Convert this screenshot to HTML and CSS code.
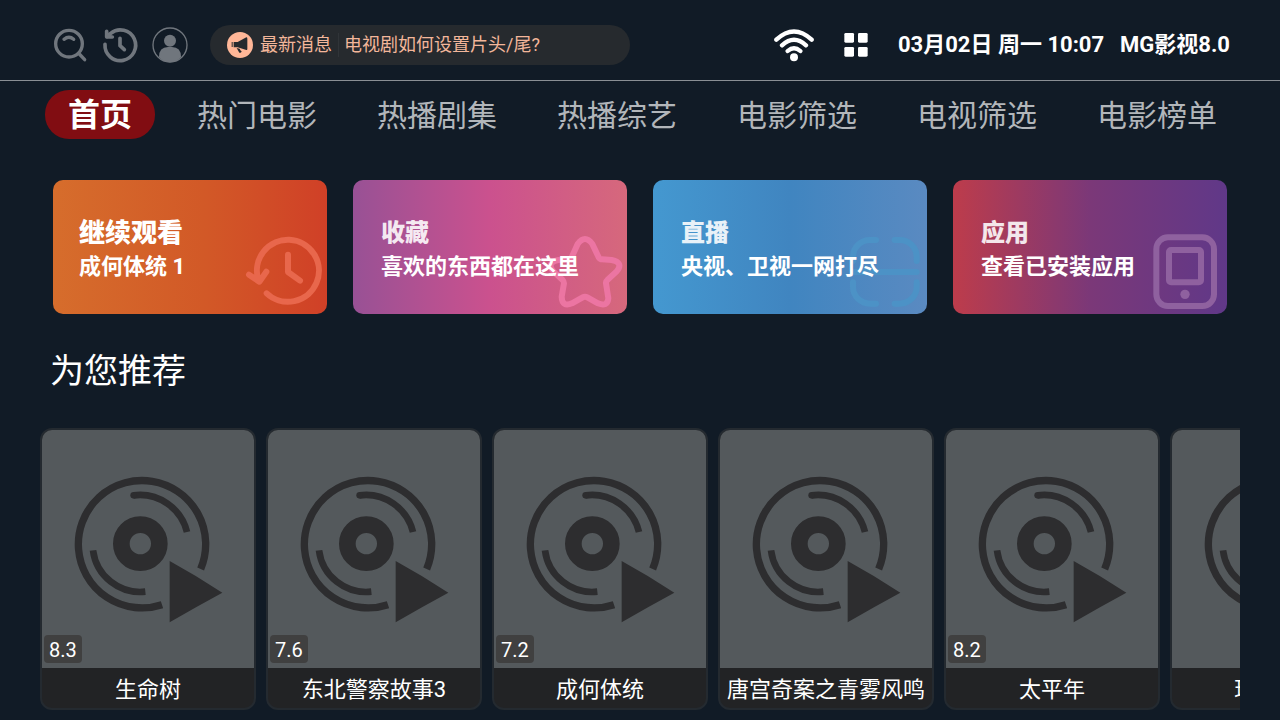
FILE: index.html
```html
<!DOCTYPE html>
<html lang="zh-CN">
<head>
  <meta charset="UTF-8">
  <meta name="viewport" content="width=device-width, initial-scale=1">
  <title>MG影视</title>
  <link rel="stylesheet" href="styles.css">
</head>
<body>
  <svg class="sprite" aria-hidden="true">
    <symbol id="disc" viewBox="130 165 450 450">
      <g fill="none" stroke="currentColor">
        <path stroke-width="22" d="M513 450A191 191 0 1 0 397 557"/>
        <path stroke-width="20" d="M312 229A146 146 0 0 1 472 339M190 394A143 143 0 0 0 347 518"/>
        <circle stroke-width="50" cx="332" cy="374" r="57"/>
      </g>
      <circle cx="312" cy="229" r="10" fill="currentColor"/>
      <path fill="currentColor" d="M420 426Q500 470 578 521Q500 563 420 610Z"/>
    </symbol>
  </svg>

  <header class="topbar">
    <button class="icon-btn" aria-label="搜索">
      <svg viewBox="30 45 120 120" fill="none" stroke="currentColor" stroke-width="10" stroke-linecap="round">
        <circle cx="87" cy="101" r="40"/>
        <path d="M118 132L134 149M72 88Q87 76 101 88"/>
      </svg>
    </button>
    <button class="icon-btn" aria-label="历史">
      <svg viewBox="180 45 120 120" fill="none" stroke="currentColor" stroke-width="11" stroke-linecap="round" stroke-linejoin="round">
        <path d="M195 103A46 46 0 1 0 212 70L201 81M200 64V81H217M240 85V107L253 119"/>
      </svg>
    </button>
    <button class="icon-btn" aria-label="用户">
      <svg viewBox="330 45 120 120" fill="currentColor">
        <circle cx="390" cy="105" r="51" fill="none" stroke="currentColor" stroke-width="4"/>
        <circle cx="390" cy="92" r="18"/>
        <path d="M357 141Q357 111 384 111H396Q423 111 423 141Q410 157 390 157Q370 157 357 141Z"/>
      </svg>
    </button>

    <a class="notice" href="#">
      <svg class="notice-icon" viewBox="561 66 78 78">
        <circle cx="600" cy="105" r="39" fill="#ffb798"/>
        <path fill="#262a2e" d="M575 96H578V111H575ZM581 96H593L619 82Q622 82 622 86V117Q622 121 619 120L593 112H581ZM590 114L599 116Q600 121 605 124Q603 130 598 128Z"/>
      </svg>
      <span class="notice-label">最新消息</span>
      <span class="notice-text">电视剧如何设置片头/尾?</span>
    </a>

    <div class="status">
      <svg class="wifi" viewBox="64 55 120 99" fill="none" stroke="#fff" stroke-width="13" stroke-linecap="round">
        <path d="M71 87Q124 38 177 87M88 104Q124 71 160 104M105 121Q124 104 143 121"/>
        <circle cx="124" cy="140" r="12" fill="#fff" stroke="none"/>
      </svg>
      <button class="grid-btn" aria-label="全部应用">
        <svg viewBox="275 69 72 72" fill="#fff">
          <rect x="276" y="69" width="29" height="29" rx="4"/>
          <rect x="317" y="69" width="29" height="29" rx="4"/>
          <rect x="276" y="111" width="29" height="29" rx="4"/>
          <rect x="317" y="111" width="29" height="29" rx="4"/>
        </svg>
      </button>
      <div class="status-text">
        <span>03月02日 周一 10:07</span>
        <span>MG影视8.0</span>
      </div>
    </div>
  </header>

  <nav class="tabs">
    <a class="tab active" href="#">首页</a>
    <a class="tab" href="#">热门电影</a>
    <a class="tab" href="#">热播剧集</a>
    <a class="tab" href="#">热播综艺</a>
    <a class="tab" href="#">电影筛选</a>
    <a class="tab" href="#">电视筛选</a>
    <a class="tab" href="#">电影榜单</a>
  </nav>

  <main>
    <section class="shortcuts">
      <a class="shortcut continue" href="#">
        <svg class="shortcut-icon" viewBox="615 192 246 240">
          <path d="M680 370A93 93 0 1 0 655 330M627 314L658 335L679 305M744 254V306L780 332"/>
        </svg>
        <strong>继续观看</strong>
        <span>成何体统 1</span>
      </a>
      <a class="shortcut favorite" href="#">
        <svg class="shortcut-icon" viewBox="615 192 246 240">
          <path d="M713 222Q735 192 757 222L776 262Q780 268 786 268L815 270Q852 278 830 304L802 330Q797 334 798 340L805 385Q802 412 774 400L742 382Q735 378 728 382L696 400Q666 412 665 380L672 340Q672 334 668 330L640 304Q618 278 655 270L685 268Q692 267 695 262Z"/>
        </svg>
        <strong>收藏</strong>
        <span>喜欢的东西都在这里</span>
      </a>
      <a class="shortcut live" href="#">
        <svg class="shortcut-icon" viewBox="615 192 246 240">
          <path d="M708 210H690A51 51 0 0 0 639 261V273M764 210H779A51 51 0 0 1 830 261V273M639 337V350A51 51 0 0 0 690 401H708M830 337V350A51 51 0 0 1 779 401H764M639 306H830"/>
        </svg>
        <strong>直播</strong>
        <span>央视、卫视一网打尽</span>
      </a>
      <a class="shortcut apps" href="#">
        <svg class="shortcut-icon" viewBox="615 192 246 240">
          <rect x="649" y="202" width="173" height="206" rx="35"/>
          <rect x="687" y="240" width="96" height="97" rx="6"/>
          <circle class="dot" cx="735" cy="373" r="14"/>
        </svg>
        <strong>应用</strong>
        <span>查看已安装应用</span>
      </a>
    </section>

    <h2 class="section-title">为您推荐</h2>

    <section class="posters">
      <a class="poster" href="#">
        <div class="cover"><svg><use href="#disc"/></svg><span class="score">8.3</span></div>
        <div class="name">生命树</div>
      </a>
      <a class="poster" href="#">
        <div class="cover"><svg><use href="#disc"/></svg><span class="score">7.6</span></div>
        <div class="name">东北警察故事3</div>
      </a>
      <a class="poster" href="#">
        <div class="cover"><svg><use href="#disc"/></svg><span class="score">7.2</span></div>
        <div class="name">成何体统</div>
      </a>
      <a class="poster" href="#">
        <div class="cover"><svg><use href="#disc"/></svg></div>
        <div class="name">唐宫奇案之青雾风鸣</div>
      </a>
      <a class="poster" href="#">
        <div class="cover"><svg><use href="#disc"/></svg><span class="score">8.2</span></div>
        <div class="name">太平年</div>
      </a>
      <a class="poster" href="#">
        <div class="cover"><svg><use href="#disc"/></svg></div>
        <div class="name">现在出发</div>
      </a>
    </section>
  </main>
</body>
</html>
```

FILE: styles.css
```css
* {
  box-sizing: border-box;
}
body {
  margin: 0;
  background: #111b26;
  color: #fff;
  font-family: Roboto, "Noto Sans CJK SC", sans-serif;
  overflow: hidden;
}
a {
  color: inherit;
  text-decoration: none;
}
button {
  padding: 0;
  border: none;
  background: none;
  color: inherit;
  cursor: pointer;
}
svg {
  display: block;
}
.sprite {
  display: none;
}

/* top bar */
.topbar {
  display: flex;
  align-items: center;
  gap: 10px;
  padding: 25px 50px 15px;
  border-bottom: 1px solid #8a8f94;
}
.icon-btn {
  width: 40px;
  height: 40px;
  color: #70767d;
}
.notice {
  display: flex;
  align-items: center;
  width: 420px;
  height: 40px;
  margin-left: 10px;
  padding: 0 17px;
  border-radius: 20px;
  background: #262a2e;
  color: #f3b69a;
  font-size: 18px;
  line-height: 24px;
}
.notice-icon {
  width: 26px;
  height: 26px;
  margin-right: 7px;
}
.notice-text {
  margin-left: 6px;
  padding-left: 5px;
  border-left: 1px solid #303438;
}
.status {
  display: flex;
  align-items: center;
  gap: 30px;
  margin-left: auto;
}
.wifi {
  width: 40px;
  height: 33px;
}
.grid-btn {
  width: 24px;
  height: 24px;
}
.status-text {
  display: flex;
  gap: 16px;
  font-size: 22px;
  font-weight: 700;
  line-height: 26px;
  white-space: nowrap;
}

/* tabs */
.tabs {
  display: flex;
  align-items: center;
  gap: 24px;
  padding: 9px 45px 0;
  overflow: hidden;
}
.tab {
  flex: none;
  padding: 2px 18px 0;
  color: #b2b6ba;
  font-size: 30px;
  line-height: 47px;
}
.tab.active {
  padding: 2px 23px 0;
  border-radius: 24px;
  background: #810d12;
  color: #fff;
  font-size: 32px;
  font-weight: 700;
}

/* shortcut cards */
.shortcuts {
  display: grid;
  grid-template-columns: repeat(4, 1fr);
  gap: 26px;
  padding: 41px 53px 0;
}
.shortcut {
  position: relative;
  display: flex;
  flex-direction: column;
  justify-content: center;
  height: 134px;
  padding: 6px 28px 0;
  border-radius: 10px;
  font-size: 22px;
  font-weight: 700;
  line-height: 34px;
  white-space: nowrap;
}
.shortcut strong {
  position: relative;
  font-size: 24px;
  opacity: 0.88;
}
.shortcut span {
  position: relative;
}
.shortcut-icon {
  position: absolute;
  right: 0;
  bottom: 0;
  width: 82px;
  height: 80px;
  fill: none;
  stroke: currentColor;
  stroke-width: 18;
  stroke-linecap: round;
  stroke-linejoin: round;
}
.shortcut-icon .dot {
  fill: currentColor;
  stroke: none;
}
.continue {
  padding: 6px 26px 0;
  background: linear-gradient(to right, #d66d2c, #d25927 55%, #d04027);
}
.continue strong {
  font-size: 26px;
  opacity: 1;
}
.continue .shortcut-icon {
  color: #e8674c;
}
.favorite {
  background: linear-gradient(to right, #985195, #cb518e 50%, #d6687c);
}
.favorite .shortcut-icon {
  color: #ec75a2;
}
.live {
  background: linear-gradient(to right, #4498d0, #4085c0 50%, #5a8ac1);
}
.live .shortcut-icon {
  color: #4c92c6;
}
.apps {
  background: linear-gradient(to right, #bd3c4b, #7b3878 50%, #603888);
}
.apps .shortcut-icon {
  color: #8f619f;
}

/* recommended */
.section-title {
  margin: 0;
  padding: 32px 50px 0;
  font-size: 34px;
  font-weight: 400;
  line-height: 50px;
}
.posters {
  display: flex;
  gap: 10px;
  margin: 32px 40px 0;
  overflow: hidden;
}
.poster {
  flex: none;
  width: 216px;
  border: 2px solid #242a30;
  border-radius: 12px;
  background: #222325;
  overflow: hidden;
}
.cover {
  position: relative;
  display: flex;
  align-items: center;
  justify-content: center;
  height: 238px;
  background: #54595c;
  color: #2d2d2f;
}
.cover svg {
  width: 150px;
  height: 150px;
}
.score {
  position: absolute;
  left: 2px;
  bottom: 5px;
  padding: 2px 5px 0;
  border-radius: 4px;
  background: #404040;
  color: #fff;
  font-size: 20px;
  line-height: 26px;
}
.name {
  padding-top: 4px;
  font-size: 22px;
  line-height: 36px;
  text-align: center;
  white-space: nowrap;
}
```
